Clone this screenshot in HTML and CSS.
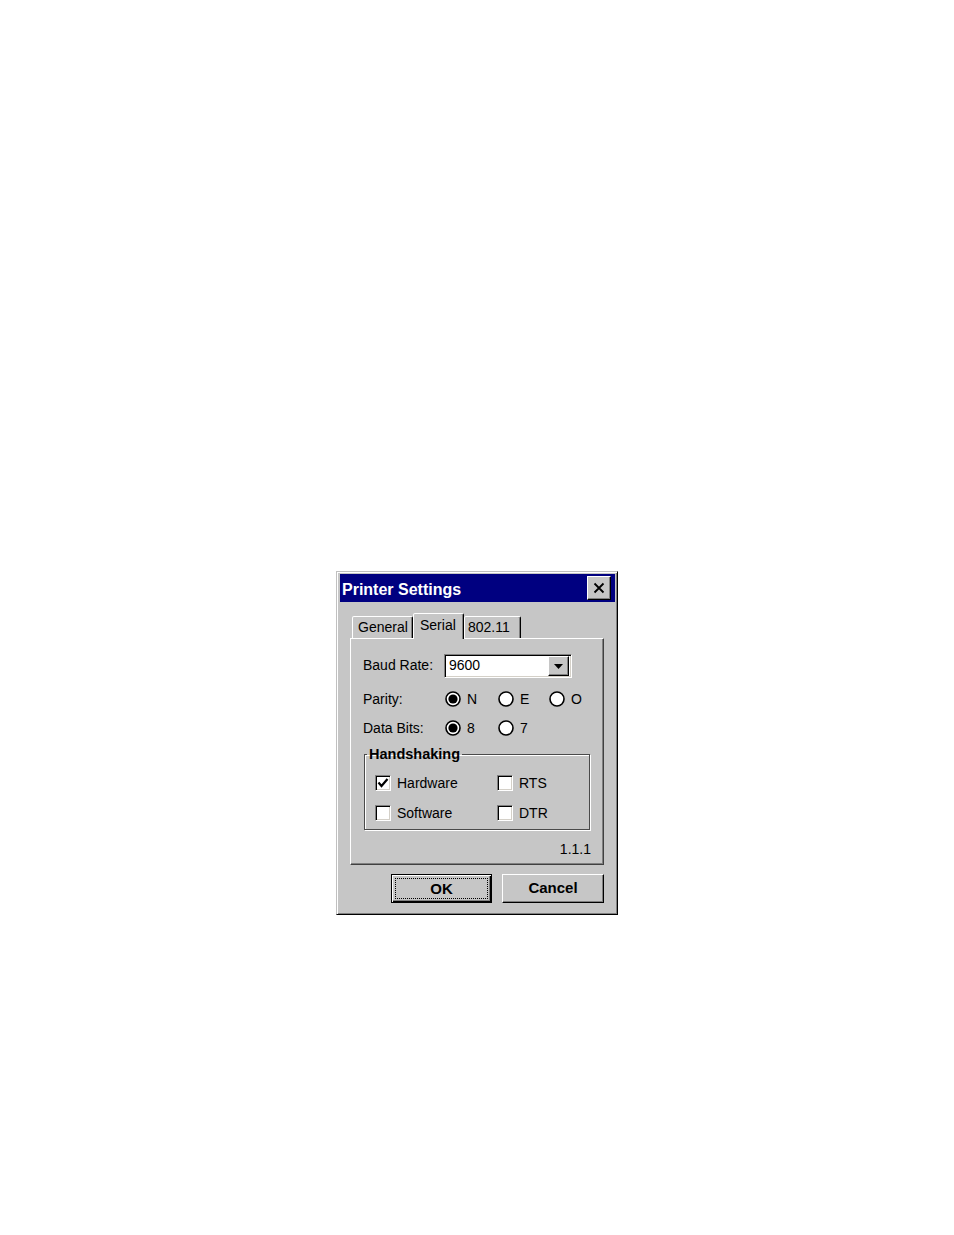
FILE: index.html
```html
<!DOCTYPE html>
<html>
<head>
<meta charset="utf-8">
<link rel="stylesheet" href="styles.css">
</head>
<body>
<div class="dialog">
  <div class="titlebar">
    <span class="title">Printer Settings</span>
    <span class="close"><svg width="12" height="12" viewBox="0 0 12 12"><path d="M1.5 1.5 L10.5 10.5 M10.5 1.5 L1.5 10.5" stroke="#000" stroke-width="1.8" fill="none"/></svg></span>
  </div>
  <div class="tabs">
    <div class="tab t-general">General</div>
    <div class="tab t-serial active">Serial</div>
    <div class="tab t-wifi">802.11</div>
  </div>
  <div class="panel">
    <div class="row baud">
      <span class="label">Baud Rate:</span>
      <div class="combo">
        <span class="combo-text">9600</span>
        <span class="combo-btn"><svg width="9" height="5" viewBox="0 0 9 5"><path d="M0 0 H9 L4.5 5 Z" fill="#000"/></svg></span>
      </div>
    </div>
    <div class="row parity">
      <span class="label">Parity:</span>
      <span class="opt w1"><svg class="radio" width="16" height="16" viewBox="0 0 16 16"><circle cx="8" cy="8" r="7" fill="#fff" stroke="#000" stroke-width="1.6"/><circle cx="8" cy="8" r="4.6" fill="#000"/></svg>N</span>
      <span class="opt w2"><svg class="radio" width="16" height="16" viewBox="0 0 16 16"><circle cx="8" cy="8" r="7" fill="#fff" stroke="#000" stroke-width="1.6"/></svg>E</span>
      <span class="opt"><svg class="radio" width="16" height="16" viewBox="0 0 16 16"><circle cx="8" cy="8" r="7" fill="#fff" stroke="#000" stroke-width="1.6"/></svg>O</span>
    </div>
    <div class="row databits">
      <span class="label">Data Bits:</span>
      <span class="opt w1"><svg class="radio" width="16" height="16" viewBox="0 0 16 16"><circle cx="8" cy="8" r="7" fill="#fff" stroke="#000" stroke-width="1.6"/><circle cx="8" cy="8" r="4.6" fill="#000"/></svg>8</span>
      <span class="opt"><svg class="radio" width="16" height="16" viewBox="0 0 16 16"><circle cx="8" cy="8" r="7" fill="#fff" stroke="#000" stroke-width="1.6"/></svg>7</span>
    </div>
    <fieldset class="group">
      <legend>Handshaking</legend>
      <div class="checks">
        <span class="chk"><span class="box"><svg width="14" height="14" viewBox="0 0 14 14"><path d="M2.5 6.5 L5.5 10 L11.5 3" stroke="#000" stroke-width="2.2" fill="none"/></svg></span>Hardware</span>
        <span class="chk"><span class="box"></span>RTS</span>
        <span class="chk"><span class="box"></span>Software</span>
        <span class="chk"><span class="box"></span>DTR</span>
      </div>
    </fieldset>
    <div class="version">1.1.1</div>
  </div>
  <div class="buttons">
    <div class="btn default"><span class="focus">OK</span></div>
    <div class="btn cancel">Cancel</div>
  </div>
</div>
</body>
</html>
```
FILE: styles.css
```css
html, body {
  margin: 0;
  padding: 0;
  background: #fff;
}
body {
  font-family: "Liberation Sans", Arial, sans-serif;
  font-size: 14px;
  color: #000;
}
.dialog {
  margin: 571px 0 0 336px;
  width: 282px;
  height: 344px;
  box-sizing: border-box;
  background: #c6c6c6;
  border: 1px solid;
  border-color: #c0c0c0 #000 #000 #c0c0c0;
  box-shadow: inset 1px 1px #fff, inset -1px -1px #808080;
  padding: 2px 2px 2px 3px;
}
.titlebar {
  height: 28px;
  box-sizing: border-box;
  background: #000080;
  display: flex;
  align-items: center;
  justify-content: space-between;
  padding-left: 2px;
}
.title {
  color: #fff;
  font-weight: bold;
  font-size: 16px;
  padding-top: 3px;
}
.close {
  width: 24px;
  height: 24px;
  box-sizing: border-box;
  margin-right: 4px;
  background: #c6c6c6;
  border: 1px solid;
  border-color: #fff #000 #000 #fff;
  box-shadow: inset -1px -1px #808080;
  display: flex;
  align-items: center;
  justify-content: center;
}
.tabs {
  display: flex;
  align-items: flex-end;
  margin-top: 10px;
  padding-left: 12px;
  height: 26px;
  position: relative;
  z-index: 1;
}
.tab {
  box-sizing: border-box;
  height: 22px;
  border: 1px solid;
  border-bottom: none;
  border-color: #fff #000 transparent #fff;
  box-shadow: inset -1px 0 #808080;
  border-radius: 2px 2px 0 0;
  display: flex;
  align-items: center;
  padding-left: 5px;
  padding-bottom: 1px;
  background: #c6c6c6;
}
.t-general { width: 61px; }
.t-serial { width: 51px; padding-left: 6px; }
.t-wifi { width: 57px; padding-left: 3px; }
.tab.active {
  height: 26px;
  margin-bottom: -1px;
  padding-bottom: 4px;
}
.panel {
  margin-left: 10px;
  width: 254px;
  height: 227px;
  box-sizing: border-box;
  border: 1px solid;
  border-color: #fff #404040 #404040 #fff;
  box-shadow: inset -1px -1px #808080;
  padding: 0 12px 0 12px;
}
.row {
  display: flex;
  align-items: center;
}
.label {
  width: 81px;
  flex: none;
}
.baud {
  margin-top: 15px;
  height: 24px;
}
.baud .label {
  padding-bottom: 2px;
}
.combo {
  width: 128px;
  height: 24px;
  box-sizing: border-box;
  border: 1px solid;
  border-color: #808080 #fff #fff #808080;
  box-shadow: inset 1px 1px #000, inset -1px -1px #d4d0c8;
  background: #fff;
  display: flex;
  align-items: center;
  justify-content: space-between;
  padding: 2px 2px 2px 4px;
}
.combo-text {
  padding-bottom: 2px;
}
.combo-btn {
  width: 21px;
  height: 20px;
  box-sizing: border-box;
  background: #c6c6c6;
  border: 1px solid;
  border-color: #fff #000 #000 #fff;
  box-shadow: inset -1px -1px #808080;
  display: flex;
  align-items: center;
  justify-content: center;
}
.parity {
  margin-top: 11px;
  height: 20px;
}
.databits {
  margin-top: 9px;
  height: 20px;
}
.opt {
  display: flex;
  align-items: center;
  gap: 6px;
  margin-left: 1px;
}
.opt.w1 { width: 52px; }
.opt.w2 { width: 50px; }
.parity .opt.w2 + .opt { margin-left: 1px; }
.radio { flex: none; }
.group {
  margin: 8px 0 0 1px;
  width: 226px;
  box-sizing: border-box;
  border: 1px solid #4a4a4a;
  box-shadow: 1px 1px #fff, inset 1px 1px #fff;
  padding: 0 0 8px 0;
  min-width: 0;
}
.group legend {
  font-weight: bold;
  font-size: 14.5px;
  padding: 0 2px;
  margin-left: 2px;
  line-height: 17px;
}
.checks {
  display: grid;
  grid-template-columns: 122px 1fr;
  row-gap: 14px;
  margin-top: 12px;
  padding-left: 10px;
}
.chk {
  display: flex;
  align-items: center;
  gap: 6px;
  height: 16px;
}
.box {
  width: 16px;
  height: 16px;
  box-sizing: border-box;
  background: #fff;
  border: 1px solid;
  border-color: #808080 #fff #fff #808080;
  box-shadow: inset 1px 1px #000, inset -1px -1px #d4d0c8;
  display: flex;
  align-items: center;
  justify-content: center;
}
.version {
  margin-top: 11px;
  text-align: right;
  line-height: 17px;
}
.buttons {
  display: flex;
  justify-content: flex-end;
  gap: 10px;
  margin-top: 9px;
  padding-right: 11px;
}
.btn {
  height: 29px;
  box-sizing: border-box;
  display: flex;
  align-items: center;
  justify-content: center;
  font-weight: bold;
  font-size: 15px;
  background: #c6c6c6;
}
.cancel {
  width: 102px;
  border: 1px solid;
  border-color: #fff #000 #000 #fff;
  box-shadow: inset -1px -1px #808080;
  padding-bottom: 2px;
}
.default {
  width: 101px;
  border: 1px solid #000;
  box-shadow: inset 1px 1px #fff, inset -1px -1px #000, inset -2px -2px #808080;
  padding: 3px;
}
.focus {
  flex: 1;
  align-self: stretch;
  display: flex;
  align-items: center;
  justify-content: center;
  border: 1px dotted #000;
  padding-bottom: 1px;
}
```
